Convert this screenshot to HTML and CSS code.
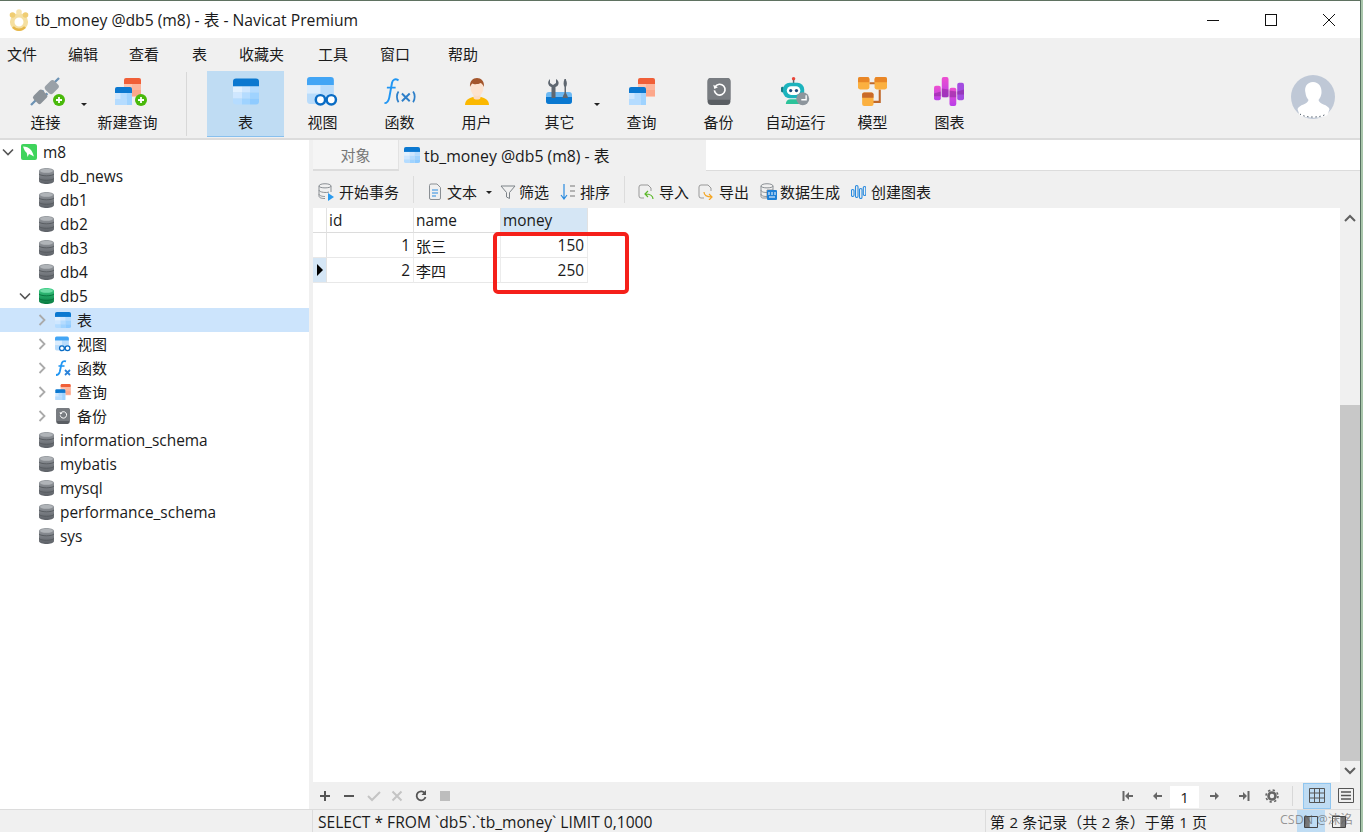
FILE: index.html
```html
<!DOCTYPE html>
<html lang="zh-CN">
<head>
<meta charset="utf-8">
<title>tb_money @db5 (m8) - 表 - Navicat Premium</title>
<link rel="stylesheet" href="styles.css">
</head>
<body>
<svg class="defs" width="0" height="0" aria-hidden="true">
  <defs>
    <linearGradient id="gdb" x1="0" y1="0" x2="0" y2="1"><stop offset="0" stop-color="#9a9ea3"/><stop offset="1" stop-color="#5c6066"/></linearGradient>
    <linearGradient id="gdbg" x1="0" y1="0" x2="0" y2="1"><stop offset="0" stop-color="#3fd088"/><stop offset="1" stop-color="#067a40"/></linearGradient>
    <linearGradient id="gpink" x1="0" y1="0" x2="0" y2="1"><stop offset="0" stop-color="#ee4fd0"/><stop offset="1" stop-color="#b93fe8"/></linearGradient>
    <symbol id="i-table" viewBox="0 0 26 26">
      <path d="M3 0h20a3 3 0 0 1 3 3v5H0V3a3 3 0 0 1 3-3z" fill="#0b78d0"/>
      <rect y="8" width="9" height="6" fill="#e2f1ff"/><rect x="9" y="8" width="8" height="6" fill="#cfe7ff"/><rect x="17" y="8" width="9" height="6" fill="#b5dcff"/>
      <rect y="14" width="9" height="6" fill="#cfe7ff"/><rect x="9" y="14" width="8" height="6" fill="#b5dcff"/><rect x="17" y="14" width="9" height="6" fill="#9fd3ff"/>
      <path d="M0 20h9v6H3a3 3 0 0 1-3-3z" fill="#b5dcff"/><rect x="9" y="20" width="8" height="6" fill="#9fd3ff"/><path d="M17 20h9v3a3 3 0 0 1-3 3h-6z" fill="#8fcbff"/>
    </symbol>
    <symbol id="i-view" viewBox="0 0 30 28">
      <path d="M3 0h20a3 3 0 0 1 3 3v5H0V3a3 3 0 0 1 3-3z" fill="#42a5f5"/>
      <path d="M0 8h26v15a3 3 0 0 1-3 3H3a3 3 0 0 1-3-3z" fill="#b9dcfb"/>
      <path d="M0 8h13v8H0z" fill="#dcedfd"/>
      <circle cx="13" cy="22" r="4.5" fill="#fff" stroke="#0a6cc4" stroke-width="2.4"/>
      <circle cx="23.5" cy="22" r="4.5" fill="#fff" stroke="#0a6cc4" stroke-width="2.4"/>
      <path d="M17.5 21.5h2" stroke="#0a6cc4" stroke-width="2.2"/>
    </symbol>
    <symbol id="i-fx" viewBox="0 0 34 28">
      <path d="M16 2.500C12.500.5 10 1.500 9.300 5L6.500 20c-.7 4-2.500 6-5 6" fill="none" stroke="#2196f3" stroke-width="2"/>
      <path d="M4 10h9" stroke="#2196f3" stroke-width="1.800"/>
      <path d="M16 14c-2.200 3-2.200 8 0 11M31 14c2.200 3 2.200 8 0 11" fill="none" stroke="#2d7fc9" stroke-width="1.800"/>
      <path d="M19.500 16l8 8M27.500 16l-8 8" stroke="#2d7fc9" stroke-width="2"/>
    </symbol>
    <symbol id="i-fxs" viewBox="0 0 16 16">
      <path d="M11 1.300C8.500.5 7 1.500 6.500 4L4.700 12c-.5 2-1.700 3-3.700 3" fill="none" stroke="#2196f3" stroke-width="1.800"/>
      <path d="M3.500 6h6" stroke="#2196f3" stroke-width="1.600"/>
      <path d="M10 10l5 5M15 10l-5 5" stroke="#2b82d9" stroke-width="1.800"/>
    </symbol>
    <symbol id="i-user" viewBox="0 0 24 27">
      <path d="M0 27c0-5 4-7 8-8h8c4 1 8 3 8 8z" fill="#fbb800"/>
      <path d="M8.500 15h7v5c-1 2-6 2-7 0z" fill="#fbdcc6"/>
      <ellipse cx="12" cy="10" rx="6.500" ry="8" fill="#fde3d0"/>
      <path d="M5 9C4.500 3 8 0 12 0s7.500 3 7 9c-1-2-2-3.500-3.500-4-2 1.500-7 1.500-8 .5C6.500 6 5.500 7.500 5 9z" fill="#a4562c"/>
    </symbol>
    <symbol id="i-other" viewBox="0 0 26 27">
      <path d="M3 14h20a3 3 0 0 1 3 3v6a3 3 0 0 1-3 3H3a3 3 0 0 1-3-3v-6a3 3 0 0 1 3-3z" fill="#6db9f3"/>
      <path d="M0 19h26v4a3 3 0 0 1-3 3H3a3 3 0 0 1-3-3z" fill="#0a78d0"/>
      <path d="M4 1v4l3 2 3-2V1c2 1 3 3 2.500 5-.4 1.500-1.500 2.500-3 3v11H5.500V9C3.500 8.500 2.500 7 2.200 5.500 2 4 2.800 2 4 1z" fill="#5f6770"/>
      <path d="M18.500 1h1.500v1c1.200 2 1.200 5 0 7v6l1.500 3 .5 2h-5.500l.5-2 1.500-3V9c-1.200-2-1.200-5 0-8z" fill="#5f6770"/>
    </symbol>
    <symbol id="i-query" viewBox="0 0 26 27">
      <path d="M9 2a2 2 0 0 1 2-2h13a2 2 0 0 1 2 2v4H9z" fill="#f05f38"/>
      <rect x="9" y="6" width="17" height="13" fill="#fdc6b2"/>
      <rect x="17" y="6" width="9" height="6" fill="#fdb59c"/><rect x="17" y="12" width="9" height="6" fill="#fca78b"/>
      <path d="M0 11a2 2 0 0 1 2-2h13a2 2 0 0 1 2 2v4H0z" fill="#0b78d0"/>
      <rect y="15" width="17" height="12" rx="1.500" fill="#cfe7ff"/>
      <rect x="5.500" y="15" width="6" height="6" fill="#b5dcff"/><rect x="11.500" y="15" width="5.500" height="12" fill="#9fd3ff"/><rect x="0" y="21" width="11.500" height="6" fill="#b5dcff"/>
    </symbol>
    <symbol id="i-backup" viewBox="0 0 22 26">
      <rect width="22" height="26" rx="3.500" fill="#5a5e63"/>
      <path d="M3 0h16a3 3 0 0 1 3 3v18H0V3a3 3 0 0 1 3-3z" fill="#787c81"/>
      <path d="M7.200 8.500A5.200 5.200 0 1 1 6.500 12" fill="none" stroke="#fff" stroke-width="1.600"/>
      <path d="M5.500 6.500l1 4 3.500-1.500z" fill="#fff"/>
    </symbol>
    <symbol id="i-robot" viewBox="0 0 30 30">
      <circle cx="13" cy="1.800" r="1.800" fill="#e9453a"/><path d="M13 3v4" stroke="#5f6770" stroke-width="1.500"/>
      <rect x="0" y="10" width="3" height="6" rx="1.500" fill="#157d86"/>
      <rect x="2" y="6" width="22" height="16" rx="7" fill="#1cb3bd"/>
      <rect x="6" y="9.500" width="14" height="9" rx="4.500" fill="#fff"/>
      <circle cx="10" cy="14" r="1.700" fill="#1e4a7a"/><circle cx="16" cy="14" r="1.700" fill="#1e4a7a"/>
      <path d="M5 28c0-3 2-5 5-5h7l4 5z" fill="#2cc39a"/>
      <circle cx="22.500" cy="22.500" r="6.700" fill="#8d959c"/>
      <path d="M26 19v4.500h-5" fill="none" stroke="#fff" stroke-width="1.400"/>
    </symbol>
    <symbol id="i-model" viewBox="0 0 28 28">
      <path d="M11 6h6M21 12v12h-7" fill="none" stroke="#c0682a" stroke-width="2"/>
      <rect width="11" height="12" rx="2" fill="#fbb040"/><path d="M2 0h7a2 2 0 0 1 2 2v3H0V2a2 2 0 0 1 2-2z" fill="#e98626"/>
      <rect x="16" width="12" height="12" rx="2" fill="#fbb040"/><path d="M18 0h8a2 2 0 0 1 2 2v3H16V2a2 2 0 0 1 2-2z" fill="#e98626"/>
      <rect x="4" y="15" width="11" height="13" rx="2" fill="#fbb040"/><path d="M6 15h7a2 2 0 0 1 2 2v3H4v-3a2 2 0 0 1 2-2z" fill="#c96a2a"/>
    </symbol>
    <symbol id="i-chart" viewBox="0 0 32 30">
      <rect x="0" y="9" width="7" height="15" rx="2" fill="url(#gpink)"/>
      <rect x="8" y="0" width="7" height="21" rx="2" fill="url(#gpink)"/>
      <rect x="16" y="11" width="7" height="19" rx="2" fill="url(#gpink)"/>
      <rect x="24" y="6" width="7" height="18" rx="2" fill="#a34de0"/>
      <path d="M0 17l7-2v5H0zM8 12l7 1v8H8zM16 14l7 1v6h-7zM24 15l7-2v5h-7z" fill="#8a2a9a" opacity=".55"/>
    </symbol>
    <symbol id="i-plug" viewBox="0 0 32 30">
      <path d="M1 29l6-6M12 16l2-2M16 19l2-2M25 6l5-5" stroke="#6d93b5" stroke-width="2.400"/>
      <rect x="4" y="15" width="13" height="11" rx="2.500" transform="rotate(-45 10.500 20.500)" fill="#8b9299"/>
      <rect x="16" y="5" width="13" height="11" rx="3" transform="rotate(-45 22.500 10.500)" fill="#9aa1a8"/>
    </symbol>
    <symbol id="i-plus" viewBox="0 0 12 12">
      <circle cx="6" cy="6" r="6" fill="#49b90b"/><path d="M6 3v6M3 6h6" stroke="#fff" stroke-width="1.800"/>
    </symbol>
    <symbol id="i-db" viewBox="0 0 15 16">
      <path d="M0 3c0-4 15-4 15 0v10c0 4-15 4-15 0z" fill="url(#gdb)"/>
      <path d="M0 6c2 2.400 13 2.400 15 0M0 10.500c2 2.400 13 2.400 15 0" fill="none" stroke="#55595e" stroke-width=".9"/>
      <ellipse cx="7.500" cy="2.800" rx="6.500" ry="2" fill="#b0b4b8"/>
    </symbol>
    <symbol id="i-dbg" viewBox="0 0 15 16">
      <path d="M0 3c0-4 15-4 15 0v10c0 4-15 4-15 0z" fill="url(#gdbg)"/>
      <path d="M0 6c2 2.400 13 2.400 15 0M0 10.500c2 2.400 13 2.400 15 0" fill="none" stroke="#05703b" stroke-width=".9"/>
      <ellipse cx="7.500" cy="2.800" rx="6.500" ry="2" fill="#6fdca6"/>
    </symbol>
    <symbol id="i-chev" viewBox="0 0 12 12"><path d="M1 3.500l5 5 5-5" fill="none" stroke="#555" stroke-width="1.600"/></symbol>
    <symbol id="i-chevr" viewBox="0 0 12 12"><path d="M3.500 1l5 5-5 5" fill="none" stroke="#aaa" stroke-width="1.800"/></symbol>
  </defs>
</svg>

<div class="desk">
<div class="window">
  <header class="titlebar">
    <svg class="logo" viewBox="0 0 22 22" width="22" height="22"><circle cx="11" cy="13" r="6.800" fill="none" stroke="#f5dfa0" stroke-width="4.600"/><path d="M5 18a8 8 0 0 0 12 0" fill="none" stroke="#e6b648" stroke-width="2.400"/><circle cx="4.500" cy="6" r="2.800" fill="#f0cd72"/><circle cx="11" cy="3" r="2.800" fill="#f7e3ac"/><circle cx="17.500" cy="6" r="2.800" fill="#f0cd72"/></svg>
    <span class="title">tb_money @db5 (m8) - 表 - Navicat Premium</span>
    <div class="winctl">
      <svg viewBox="0 0 14 14" width="14" height="14"><path d="M1 7.500h12" stroke="#111"/></svg>
      <svg viewBox="0 0 14 14" width="14" height="14"><rect x="1.500" y="1.500" width="11" height="11" fill="none" stroke="#111"/></svg>
      <svg viewBox="0 0 14 14" width="14" height="14"><path d="M1 1l12 12M13 1L1 13" stroke="#111"/></svg>
    </div>
  </header>

  <nav class="menubar">
    <span>文件</span><span>编辑</span><span>查看</span><span>表</span><span>收藏夹</span><span>工具</span><span>窗口</span><span>帮助</span>
  </nav>

  <div class="ribbon">
    <div class="tool"><span class="tico"><svg class="s30"><use href="#i-plug"/></svg><svg class="badge"><use href="#i-plus"/></svg></span><span>连接</span></div>
    <i class="caret c1"></i>
    <div class="tool"><span class="tico"><svg class="s26"><use href="#i-query"/></svg><svg class="badge"><use href="#i-plus"/></svg></span><span>新建查询</span></div>
    <i class="rsep"></i>
    <div class="tool active"><span class="tico"><svg class="s26"><use href="#i-table"/></svg></span><span>表</span></div>
    <div class="tool"><span class="tico"><svg class="s30"><use href="#i-view"/></svg></span><span>视图</span></div>
    <div class="tool"><span class="tico"><svg class="s32"><use href="#i-fx"/></svg></span><span>函数</span></div>
    <div class="tool"><span class="tico"><svg class="s26"><use href="#i-user"/></svg></span><span>用户</span></div>
    <div class="tool other"><span class="tico"><svg class="s26"><use href="#i-other"/></svg></span><span>其它</span></div>
    <i class="caret c2"></i>
    <div class="tool"><span class="tico"><svg class="s26"><use href="#i-query"/></svg></span><span>查询</span></div>
    <div class="tool"><span class="tico"><svg class="s26"><use href="#i-backup"/></svg></span><span>备份</span></div>
    <div class="tool"><span class="tico"><svg class="s30"><use href="#i-robot"/></svg></span><span>自动运行</span></div>
    <div class="tool"><span class="tico"><svg class="s30"><use href="#i-model"/></svg></span><span>模型</span></div>
    <div class="tool"><span class="tico"><svg class="s32"><use href="#i-chart"/></svg></span><span>图表</span></div>
    <div class="avatar">
      <svg viewBox="0 0 46 46" width="46" height="46"><circle cx="23" cy="22" r="22" fill="#bfc8d6"/><path d="M23 7c6 0 9 5 8.500 11-.3 3-1.500 5-3 7 .5 2 2 3 5 4.500 3 1 5 2.500 6 4.500l-2 6c-4 3.500-24 3.500-28 0l-2-6c1-2 3-3.500 6-4.500 3-1.500 4.500-2.500 5-4.500-1.500-2-2.700-4-3-7C14 12 17 7 23 7z" fill="#fff"/><path d="M10 39c5 4 21 4 26 0" fill="none" stroke="#123" stroke-width="1" stroke-dasharray="1 3"/></svg>
    </div>
  </div>

  <div class="main">
    <aside class="tree">
      <div class="row l0"><svg class="tw"><use href="#i-chev"/></svg><svg class="conn" viewBox="0 0 16 16"><rect width="16" height="16" rx="2" fill="#3fd45c"/><path d="M2 2.500c3 0 6 1 8 3.500 1.500 1.800 2 4 3 6.500-2-1-3.500-2-5-2.500L6.500 13l-.7-4C4 7.500 2.800 5 2 2.500z" fill="#fff"/></svg><span>m8</span></div>
      <div class="row l1"><i class="tw"></i><svg class="ic"><use href="#i-db"/></svg><span>db_news</span></div>
      <div class="row l1"><i class="tw"></i><svg class="ic"><use href="#i-db"/></svg><span>db1</span></div>
      <div class="row l1"><i class="tw"></i><svg class="ic"><use href="#i-db"/></svg><span>db2</span></div>
      <div class="row l1"><i class="tw"></i><svg class="ic"><use href="#i-db"/></svg><span>db3</span></div>
      <div class="row l1"><i class="tw"></i><svg class="ic"><use href="#i-db"/></svg><span>db4</span></div>
      <div class="row l1"><svg class="tw"><use href="#i-chev"/></svg><svg class="ic"><use href="#i-dbg"/></svg><span>db5</span></div>
      <div class="row l2 sel"><svg class="tw"><use href="#i-chevr"/></svg><svg class="ic2"><use href="#i-table"/></svg><span>表</span></div>
      <div class="row l2"><svg class="tw"><use href="#i-chevr"/></svg><svg class="ic2"><use href="#i-view"/></svg><span>视图</span></div>
      <div class="row l2"><svg class="tw"><use href="#i-chevr"/></svg><svg class="ic2"><use href="#i-fxs"/></svg><span>函数</span></div>
      <div class="row l2"><svg class="tw"><use href="#i-chevr"/></svg><svg class="ic2"><use href="#i-query"/></svg><span>查询</span></div>
      <div class="row l2"><svg class="tw"><use href="#i-chevr"/></svg><svg class="ic2"><use href="#i-backup"/></svg><span>备份</span></div>
      <div class="row l1"><i class="tw"></i><svg class="ic"><use href="#i-db"/></svg><span>information_schema</span></div>
      <div class="row l1"><i class="tw"></i><svg class="ic"><use href="#i-db"/></svg><span>mybatis</span></div>
      <div class="row l1"><i class="tw"></i><svg class="ic"><use href="#i-db"/></svg><span>mysql</span></div>
      <div class="row l1"><i class="tw"></i><svg class="ic"><use href="#i-db"/></svg><span>performance_schema</span></div>
      <div class="row l1"><i class="tw"></i><svg class="ic"><use href="#i-db"/></svg><span>sys</span></div>
    </aside>

    <section class="content">
      <div class="tabs">
        <div class="tab obj">对象</div>
        <div class="tab cur"><svg class="tabic"><use href="#i-table"/></svg><span>tb_money @db5 (m8) - 表</span></div>
      </div>

      <div class="tbar">
        <div class="tb b1"><svg viewBox="0 0 18 18" width="18" height="18"><path d="M1 3c0-3 12-3 12 0v6M1 3v10c0 2 3 2.500 6 2.500M1 3c0 2.500 12 2.500 12 0M1 7c0 2.500 8 3 10 2M1 11c0 2 4 2.500 6 2.500" fill="none" stroke="#8a8f94"/><path d="M10 10l6 4-6 4z" fill="#2a9bef"/></svg><span>开始事务</span></div>
        <i class="tsep s1"></i>
        <div class="tb b2"><svg viewBox="0 0 14 18" width="14" height="18"><path d="M1.500 2.500a1.500 1.500 0 0 1 1.500-1.500h6l3.500 3.500v10.500a1.500 1.500 0 0 1-1.500 1.500H3a1.500 1.500 0 0 1-1.500-1.500z" fill="none" stroke="#8a8f94"/><path d="M4 7h6M4 10h6M4 13h4" stroke="#2a8bdf"/></svg><span>文本</span><i class="caret c3"></i></div>
        <div class="tb b3"><svg viewBox="0 0 16 16" width="16" height="16"><path d="M1 2h14l-5.500 6.500v6L6.500 13V8.500z" fill="none" stroke="#7d8388"/></svg><span>筛选</span></div>
        <div class="tb b4"><svg viewBox="0 0 16 18" width="16" height="18"><path d="M4 1v14M1 12l3 4 3-4" fill="none" stroke="#2a8bdf" stroke-width="1.200"/><path d="M10 3h5M10 8h5M10 13h5" stroke="#777"/></svg><span>排序</span></div>
        <i class="tsep s2"></i>
        <div class="tb b5"><svg viewBox="0 0 16 16" width="16" height="16"><path d="M6 14H3a2 2 0 0 1-2-2V3a2 2 0 0 1 2-2h7l3 3v3" fill="none" stroke="#999"/><path d="M15 15c0-4-3-5-8-5M10 7l-3 3 3 3" fill="none" stroke="#5cb82a" stroke-width="1.200"/></svg><span>导入</span></div>
        <div class="tb b6"><svg viewBox="0 0 16 16" width="16" height="16"><path d="M6 14H3a2 2 0 0 1-2-2V3a2 2 0 0 1 2-2h7l3 3v3" fill="none" stroke="#999"/><path d="M6 8c0 4 3 5 8 5M11 10l3 3-3 3" fill="none" stroke="#f5a623" stroke-width="1.200"/></svg><span>导出</span></div>
        <div class="tb b7"><svg viewBox="0 0 17 17" width="17" height="17"><path d="M1 3c0-3 12-3 12 0v4H7v8H3c-1 0-2-.5-2-1.500zM1 3c0 2.500 12 2.500 12 0M1 7c0 2 3 2.500 6 2.500M1 11c0 2 3 2.500 6 2.500" fill="none" stroke="#8a8f94"/><rect x="7" y="7" width="10" height="10" rx="1" fill="#1c7fd6"/><path d="M9 9v3M12 9v3M15 9v3M9 14h6" stroke="#fff"/></svg><span>数据生成</span></div>
        <div class="tb b8"><svg viewBox="0 0 15 15" width="15" height="15"><g fill="none" stroke="#2a8bdf" stroke-width="1.100"><rect x=".5" y="5.500" width="2.500" height="7" rx="1.250"/><rect x="4.500" y="1.500" width="2.500" height="12" rx="1.250"/><rect x="8.500" y="4.500" width="2.500" height="10" rx="1.250"/><rect x="12.300" y="2.500" width="2.500" height="9" rx="1.250"/></g></svg><span>创建图表</span></div>
      </div>

      <div class="gridwrap">
        <div class="grid">
          <table class="data">
            <thead><tr><th class="ind"></th><th>id</th><th>name</th><th class="hl">money</th></tr></thead>
            <tbody>
              <tr><td class="ind"></td><td class="num">1</td><td class="zh">张三</td><td class="num">150</td></tr>
              <tr><td class="ind on"><i class="rowmark"></i></td><td class="num">2</td><td class="zh">李四</td><td class="num">250</td></tr>
            </tbody>
          </table>
          <div class="redbox"></div>
        </div>
        <div class="scroll">
          <svg class="sarrow" viewBox="0 0 12 8" width="12" height="8"><path d="M1 7l5-5 5 5" fill="none" stroke="#606060" stroke-width="2"/></svg>
          <div class="strack"><div class="sthumb"></div></div>
          <svg class="sarrow" viewBox="0 0 12 8" width="12" height="8"><path d="M1 1l5 5 5-5" fill="none" stroke="#606060" stroke-width="2"/></svg>
        </div>
      </div>

      <div class="bottombar">
        <div class="bleft">
          <svg viewBox="0 0 12 12" width="12" height="12"><path d="M6 1v10M1 6h10" stroke="#555" stroke-width="2"/></svg>
          <svg viewBox="0 0 12 12" width="12" height="12"><path d="M1 6h10" stroke="#555" stroke-width="2"/></svg>
          <svg viewBox="0 0 14 12" width="14" height="12"><path d="M1 6l4 4 8-8" fill="none" stroke="#c4c4c4" stroke-width="2"/></svg>
          <svg viewBox="0 0 12 12" width="12" height="12"><path d="M1.500 1.500l9 9M10.500 1.500l-9 9" stroke="#c4c4c4" stroke-width="2"/></svg>
          <svg viewBox="0 0 12 12" width="12" height="12"><path d="M10 3.500A4.500 4.500 0 1 0 10.500 7" fill="none" stroke="#555" stroke-width="1.800"/><path d="M11 0v5H6.500z" fill="#555"/></svg>
          <svg viewBox="0 0 12 12" width="12" height="12"><rect x="1" y="1" width="10" height="10" fill="#bdbdbd"/></svg>
        </div>
        <div class="bright">
          <svg viewBox="0 0 12 12" width="12" height="12"><path d="M1.500 1v10" stroke="#666" stroke-width="2"/><path d="M11 6H5" stroke="#666" stroke-width="2"/><path d="M7 2L3 6l4 4z" fill="#666"/></svg>
          <svg class="g2" viewBox="0 0 12 12" width="12" height="12"><path d="M11 6H5" stroke="#666" stroke-width="2"/><path d="M6 2L2 6l4 4z" fill="#666"/></svg>
          <span class="page">1</span>
          <svg class="g3" viewBox="0 0 12 12" width="12" height="12"><path d="M1 6h6" stroke="#666" stroke-width="2"/><path d="M6 2l4 4-4 4z" fill="#666"/></svg>
          <svg class="g4" viewBox="0 0 12 12" width="12" height="12"><path d="M10.500 1v10" stroke="#666" stroke-width="2"/><path d="M1 6h6" stroke="#666" stroke-width="2"/><path d="M5 2l4 4-4 4z" fill="#666"/></svg>
          <svg class="g5" viewBox="0 0 14 14" width="14" height="14"><circle cx="7" cy="7" r="3.500" fill="none" stroke="#666" stroke-width="2.600"/><circle cx="7" cy="7" r="6" fill="none" stroke="#666" stroke-width="1.600" stroke-dasharray="2.300 2.400"/></svg>
          <i class="bsep"></i>
          <span class="vbtn on"><svg viewBox="0 0 16 15" width="16" height="15"><path d="M.5.500h15v14H.5zM.5 5h15M.5 10h15M5.500.500v14M10.500.500v14" fill="none" stroke="#555"/></svg></span>
          <span class="vbtn"><svg viewBox="0 0 16 15" width="16" height="15"><path d="M.5.500h15v14H.5z" fill="none" stroke="#555"/><path d="M3 4h10M3 7.500h10M3 11h10" stroke="#555" stroke-width="1.600"/></svg></span>
        </div>
      </div>
    </section>
  </div>

  <footer class="status">
    <div class="st-empty"></div>
    <div class="st-sql">SELECT * FROM `db5`.`tb_money` LIMIT 0,1000</div>
    <div class="st-rec">第 2 条记录（共 2 条）于第 1 页</div>
    <span class="stbtn on"><svg viewBox="0 0 14 14" width="14" height="14"><path d="M.5 2.500h13v11H.5zM5 2.500v11" fill="none" stroke="#444"/><path d="M1 3h4v10H1z" fill="#777"/></svg></span>
    <span class="stbtn"><svg viewBox="0 0 14 14" width="14" height="14"><path d="M.5 2.500h13v11H.5zM9 2.500v11" fill="none" stroke="#444"/><path d="M9 3h4v10H9z" fill="#777"/></svg></span>
    <span class="mark">CSDN @沫洺</span>
  </footer>
</div>
</div>
</body>
</html>
```
FILE: styles.css
```css
* { box-sizing: border-box; }
html, body { margin: 0; height: 100%; overflow: hidden; }
body {
  font-family: "Open Sans", "Noto Sans CJK SC", sans-serif;
  font-size: 15px;
  color: #1a1a1a;
}
.defs { position: absolute; }
.desk { width: 1363px; height: 832px; background: #a9c6ab; padding-right: 2px; }
.window {
  width: 1361px; height: 832px;
  border-top: 1px solid #5f7261;
  border-right: 1px solid #55705f;
  display: flex; flex-direction: column;
  background: #f0f0f0;
}
.titlebar { height: 37px; background: #fff; display: flex; align-items: center; padding-left: 8px; flex: none; }
.logo { margin-right: 5px; }
.title { font-size: 15.7px; }
.winctl { margin-left: auto; display: flex; gap: 44px; padding-right: 24px; }

.menubar { height: 32px; flex: none; display: flex; align-items: center; padding: 0 0 2px 7px; }
.menubar span:nth-child(1), .menubar span:nth-child(2) { width: 61px; }
.menubar span:nth-child(3) { width: 63px; }
.menubar span:nth-child(4) { width: 47px; }
.menubar span:nth-child(5) { width: 79px; }
.menubar span:nth-child(6) { width: 62px; }
.menubar span:nth-child(7) { width: 68px; }

.ribbon { height: 68px; flex: none; display: flex; padding: 1px 0 1px 7px; align-items: stretch; }
.tool { width: 77px; display: flex; flex-direction: column; align-items: center; line-height: 20px; }
.tool.active { background: #bfdcf3; border-bottom: 1px solid #88c0ee; }
.tool.other { margin-left: 6px; }
.tico { height: 41px; flex: none; display: flex; align-items: center; justify-content: center; position: relative; width: 40px; }
.tool.other .tico { margin-left: -2px; }
.s26 { width: 26px; height: 27px; }
.s30 { width: 31px; height: 29px; }
.s32 { width: 33px; height: 29px; }
.badge { position: absolute; width: 12px; height: 12px; right: 1px; bottom: 6px; }
.caret { width: 0; height: 0; border-left: 3px solid transparent; border-right: 3px solid transparent; border-top: 3px solid #222; display: block; flex: none; }
.c1 { margin: 32px 2px 0 -3px; }
.c2 { margin: 32px 3px 0 -4px; }
.rsep { width: 1px; background: #d8d8d8; margin: 1px 20px 1px 20px; flex: none; }
.avatar { margin-left: auto; margin-right: 24px; padding-top: 4px; }

.main { flex: 1; min-height: 0; display: flex; border-top: 2px solid #dcdcdc; }
.tree { width: 309px; flex: none; background: #fff; font-size: 15.45px; }
.row { height: 24px; display: flex; align-items: center; }
.tw { width: 12px; height: 12px; flex: none; display: block; }
.l0 { padding-left: 2px; }
.l1 { padding-left: 19px; }
.l2 { padding-left: 36px; }
.l2 span { font-size: 15px; margin-top: -2px; }
.conn { width: 16px; height: 16px; margin: 0 6px 0 7px; }
.ic { width: 15px; height: 16px; margin: 0 6px 0 8px; }
.ic2 { width: 16px; height: 16px; margin: 0 6px 0 7px; }
.sel { background: #cce4fc; }

.content { flex: 1; min-width: 0; margin-left: 4px; display: flex; flex-direction: column; }
.tabs { height: 31px; flex: none; display: flex; background: #fff; border-bottom: 1px solid #dcdcdc; }
.tab { display: flex; align-items: center; background: #f0f0f0; }
.obj { width: 86px; justify-content: center; color: #777; background: #f5f5f5; border-right: 1px solid #e2e2e2; border-bottom: 1px solid #dcdcdc; }
.cur { width: 307px; padding-left: 5px; gap: 4px; margin-bottom: -1px; font-size: 15.8px; }
.tabic { width: 16px; height: 16px; margin-top: -2px; }
.tbar { height: 37px; flex: none; display: flex; align-items: center; padding: 4px 0 0 5px; }
.tb { display: flex; align-items: center; gap: 3px; flex: none; }
.tsep { width: 1px; height: 27px; background: #dcdcdc; flex: none; margin-top: -4px; }
.s1 { margin-left: 14px; margin-right: 14px; }
.s2 { margin-left: 14px; margin-right: 13px; }
.b2 { gap: 5px; }
.c3 { margin: 1px 8px 0 4px; }
.b3 { margin-right: 11px; }
.b4 { gap: 4px; }
.b5 { gap: 5px; margin-right: 9px; }
.b6 { gap: 5px; margin-right: 11px; }
.b7 { margin-right: 11px; }
.b8 { gap: 5px; }

.gridwrap { flex: 1; min-height: 0; display: flex; }
.grid { flex: 1; background: #fff; position: relative; min-width: 0; }
.data { border-collapse: separate; border-spacing: 0; table-layout: fixed; width: 275px; font-size: 15.4px; }
.data th { font-weight: 400; text-align: left; height: 25px; padding: 0 0 0 2px; background: #fff; border-right: 1px solid #e2e2e2; border-bottom: 1px solid #dcdcdc; }
.data th.hl { background: #d5e6f5; }
.data td { height: 25px; padding: 0 2px; border-right: 1px solid #ececec; border-bottom: 1px solid #e8e8e8; }
.data td.zh { font-size: 15px; }
.data th.ind, .data td.ind { width: 14px; background: #fff; padding: 0; border-right: 1px solid #e2e2e2; }
.data td.ind.on { background: #d5e6f5; }
.data th:nth-child(n+2), .data td:nth-child(n+2) { width: 87px; }
.data td.num { text-align: right; padding-right: 3px; }
.rowmark { display: block; width: 0; height: 0; margin-left: 4px; border-left: 6px solid #000; border-top: 6px solid transparent; border-bottom: 6px solid transparent; }
.redbox { position: absolute; left: 180px; top: 24px; width: 136px; height: 62px; border: 4px solid #f5201a; border-radius: 5px; }
.scroll { width: 20px; flex: none; background: #f0f0f0; display: flex; flex-direction: column; align-items: center; padding: 6px 0 7px; }
.strack { flex: 1; width: 100%; display: flex; flex-direction: column; justify-content: flex-end; padding: 0 0 6px; }
.sthumb { height: 356px; background: #c8c8c8; }
.sarrow { flex: none; }

.bottombar { height: 27px; flex: none; display: flex; align-items: center; justify-content: space-between; padding-left: 6px; }
.bleft { display: flex; align-items: center; gap: 12px; }
.bleft svg:nth-child(3) { margin-right: -2px; }
.bright { display: flex; align-items: center; align-self: stretch; }
.g2 { margin-left: 17px; }
.page { width: 29px; height: 22px; background: #fff; margin: 3px 10px 0 7px; text-align: center; line-height: 22px; }
.g4 { margin-left: 17px; }
.g5 { margin-left: 15px; }
.bsep { width: 1px; height: 20px; background: #d8d8d8; margin: 0 10px 0 13px; }
.vbtn { width: 28px; height: 26px; display: flex; align-items: center; justify-content: center; border: 1px solid transparent; }
.vbtn.on { background: #bfdcf3; border-color: #90c6f0; }
.vbtn + .vbtn { margin-left: 1px; }

.status { height: 23px; flex: none; display: flex; align-items: center; border-top: 1px solid #dcdcdc; position: relative; }
.st-empty { width: 313px; height: 100%; border-right: 1px solid #dcdcdc; }
.st-sql { width: 672px; padding-left: 5px; height: 100%; line-height: 24px; font-size: 15.6px; }
.st-rec { width: 312px; padding-left: 4px; height: 100%; line-height: 24px; border-left: 1px solid #dcdcdc; word-spacing: .5px; }
.stbtn { width: 28px; height: 100%; display: flex; align-items: center; justify-content: center; }
.stbtn.on { background: #bfdcf3; }
.mark { position: absolute; left: 1280px; top: -1px; font-size: 12.5px; line-height: 22px; color: rgba(90,90,90,.62); white-space: nowrap; }
```
